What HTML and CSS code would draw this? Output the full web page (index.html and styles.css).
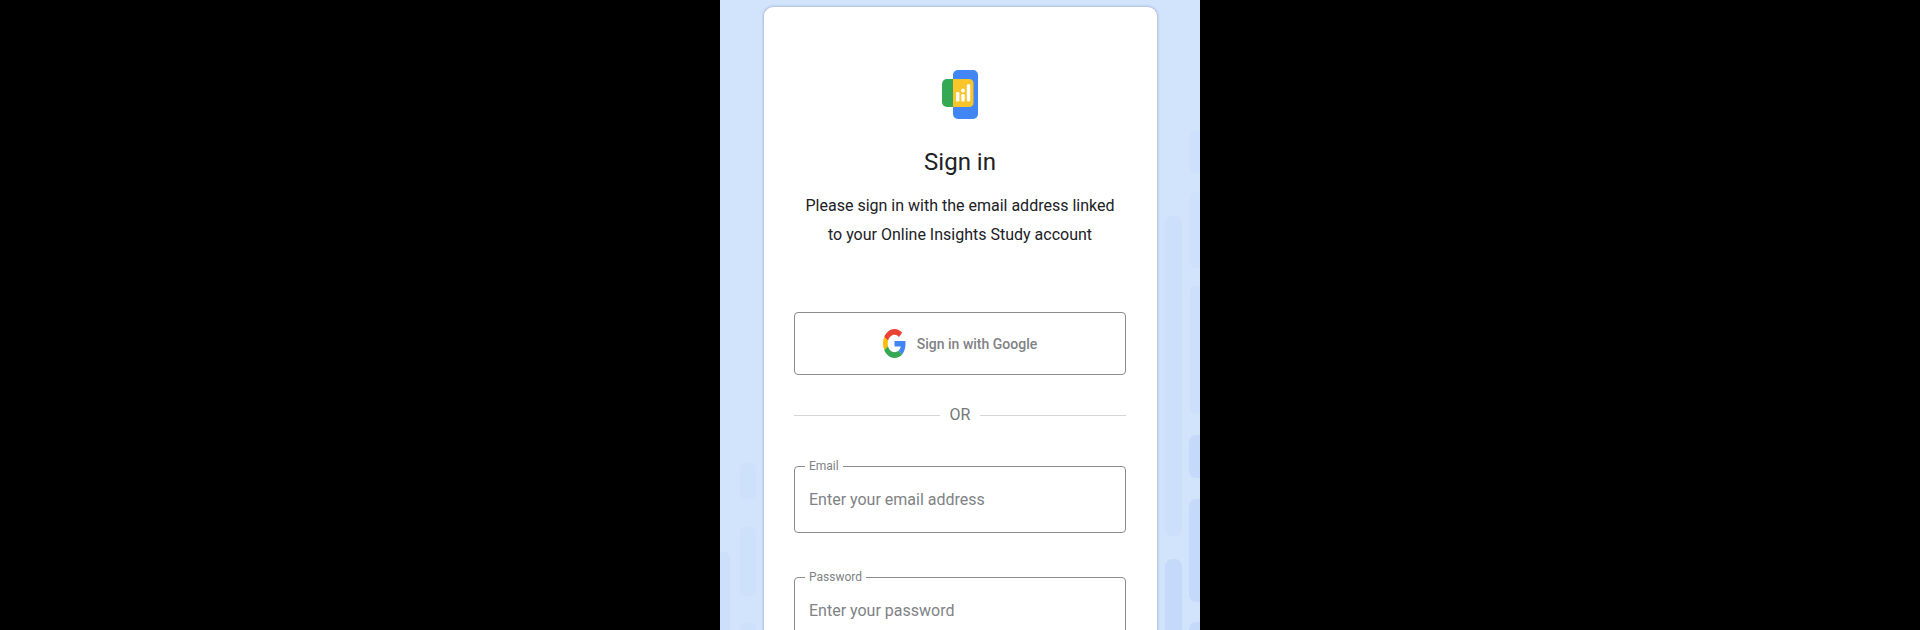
FILE: index.html
```html
<!DOCTYPE html>
<html lang="en">
<head>
  <meta charset="UTF-8" />
  <meta name="viewport" content="width=device-width, initial-scale=1.0" />
  <title>Sign in</title>
  <link rel="stylesheet" href="styles.css">
</head>
<body>

  <main class="stage">

    <!-- Background pills -->
    <svg class="backdrop" viewBox="0 0 480 630" preserveAspectRatio="xMidYMin slice" aria-hidden="true">
      <g fill="#ccdffb">
        <rect x="20" y="463" width="16" height="36" rx="6" opacity="0.7" />
        <rect x="20" y="526" width="16" height="70" rx="6" opacity="0.7" />
        <rect x="20" y="622" width="16" height="60" rx="6" opacity="0.7" />
        <rect x="-10" y="552" width="20" height="120" rx="6" />
        <rect x="445" y="216" width="17" height="320" rx="7" />
        <rect x="470" y="130" width="24" height="44" rx="7" opacity="0.6" />
        <rect x="470" y="192" width="24" height="76" rx="7" opacity="0.8" />
        <rect x="470" y="286" width="24" height="128" rx="7" />
      </g>
      <g fill="#c5dafa">
        <rect x="445" y="559" width="17" height="120" rx="7" />
        <rect x="469" y="435" width="24" height="43" rx="7" />
        <rect x="469" y="499" width="24" height="103" rx="7" />
        <rect x="469" y="622" width="24" height="80" rx="7" />
      </g>
    </svg>

    <form class="card">
      <svg class="logo" viewBox="0 0 36 49" role="img" aria-label="Online Insights Study">
        <rect x="0" y="9" width="18" height="28" rx="5" fill="#34a853" />
        <rect x="11" y="0" width="25" height="49" rx="5" fill="#4285f4" />
        <path d="M11 9h16q4.500 0 4.500 4.500v19q0 4.500-4.500 4.500h-16z" fill="#f9c52b" />
        <g fill="#fff">
          <rect x="14" y="22" width="3.400" height="9.500" rx="1.300" />
          <circle cx="21" cy="20.500" r="1.900" />
          <rect x="19.300" y="24" width="3.400" height="7.500" rx="1.300" />
          <rect x="24.800" y="14" width="3.400" height="17.500" rx="1.500" />
        </g>
      </svg>

      <h1 class="title">Sign in</h1>
      <p class="intro">Please sign in with the email address linked<br>to your Online Insights Study account</p>

      <button type="button" class="google-btn">
        <svg class="google-icon" viewBox="0 0 48 48" preserveAspectRatio="none" aria-hidden="true">
          <path fill="#ea4335" d="M24 9.500c3.540 0 6.710 1.220 9.210 3.600l6.850-6.850C35.900 2.380 30.470 0 24 0 14.620 0 6.510 5.380 2.560 13.220l7.980 6.190C12.430 13.720 17.740 9.500 24 9.500z" />
          <path fill="#4285f4" d="M46.980 24.550c0-1.570-.15-3.090-.38-4.550H24v9.020h12.940c-.58 2.960-2.260 5.480-4.780 7.180l7.730 6c4.510-4.180 7.090-10.360 7.090-17.650z" />
          <path fill="#fbbc05" d="M10.530 28.590c-.48-1.450-.76-2.990-.76-4.590s.27-3.140.76-4.590l-7.980-6.190C.92 16.460 0 20.120 0 24c0 3.880.92 7.540 2.560 10.780l7.970-6.190z" />
          <path fill="#34a853" d="M24 48c6.480 0 11.930-2.130 15.890-5.810l-7.730-6c-2.150 1.450-4.920 2.300-8.160 2.300-6.260 0-11.570-4.220-13.470-9.910l-7.980 6.190C6.510 42.620 14.620 48 24 48z" />
        </svg>
        <span>Sign in with Google</span>
      </button>

      <div class="divider">OR</div>

      <div class="field">
        <label for="email">Email</label>
        <input type="email" id="email" placeholder="Enter your email address">
      </div>

      <div class="field">
        <label for="password">Password</label>
        <input type="password" id="password" placeholder="Enter your password">
      </div>
    </form>

  </main>

</body>
</html>
```
FILE: styles.css
```css
* {
  box-sizing: border-box;
  margin: 0;
  padding: 0;
}

body {
  font-family: Roboto, sans-serif;
  background: #000;
  color: #202124;
}

.stage {
  position: relative;
  max-width: 480px;
  height: 100vh;
  margin: 0 auto;
  padding: 7px 43px 0 44px;
  background: #d2e3fc;
  overflow: hidden;
}

.backdrop {
  position: absolute;
  inset: 0;
  width: 100%;
  height: 100%;
}

.card {
  position: relative;
  display: flex;
  flex-direction: column;
  padding: 63px 31px 48px 30px;
  background: #fff;
  border-radius: 9px;
  box-shadow: 0 0 3px rgba(60, 80, 120, 0.5);
}

.logo {
  align-self: center;
  width: 36px;
  height: 49px;
}

.title {
  margin-top: 25px;
  font-size: 24px;
  line-height: 36px;
  font-weight: 400;
  text-align: center;
}

.intro {
  margin-top: 11px;
  font-size: 16px;
  line-height: 29px;
  text-align: center;
  white-space: nowrap;
}

.google-btn {
  display: flex;
  align-items: center;
  justify-content: center;
  gap: 11px;
  height: 63px;
  margin-top: 63px;
  border: 1px solid #8a8c8f;
  border-radius: 4px;
  background: #fff;
  color: #808285;
  font-family: inherit;
  font-size: 14px;
  font-weight: 500;
  cursor: pointer;
}

.google-icon {
  width: 23px;
  height: 29px;
}

.divider {
  display: flex;
  align-items: center;
  gap: 10px;
  margin-top: 28px;
  font-size: 16px;
  line-height: 24px;
  color: #757779;
}

.divider::before,
.divider::after {
  content: "";
  flex: 1;
  height: 1px;
  background: #d5d6d8;
}

.field {
  position: relative;
  margin-top: 39px;
}

.field + .field {
  margin-top: 44px;
}

.field label {
  position: absolute;
  top: -8px;
  left: 11px;
  padding: 0 4px;
  background: #fff;
  font-size: 12px;
  line-height: 16px;
  color: #808285;
}

.field input {
  display: block;
  width: 100%;
  height: 67px;
  padding: 0 14px;
  border: 1px solid #8a8c8f;
  border-radius: 4px;
  background: #fff;
  font-family: inherit;
  font-size: 16px;
  color: #202124;
}

.field input::placeholder {
  color: #808285;
  opacity: 1;
}
```
